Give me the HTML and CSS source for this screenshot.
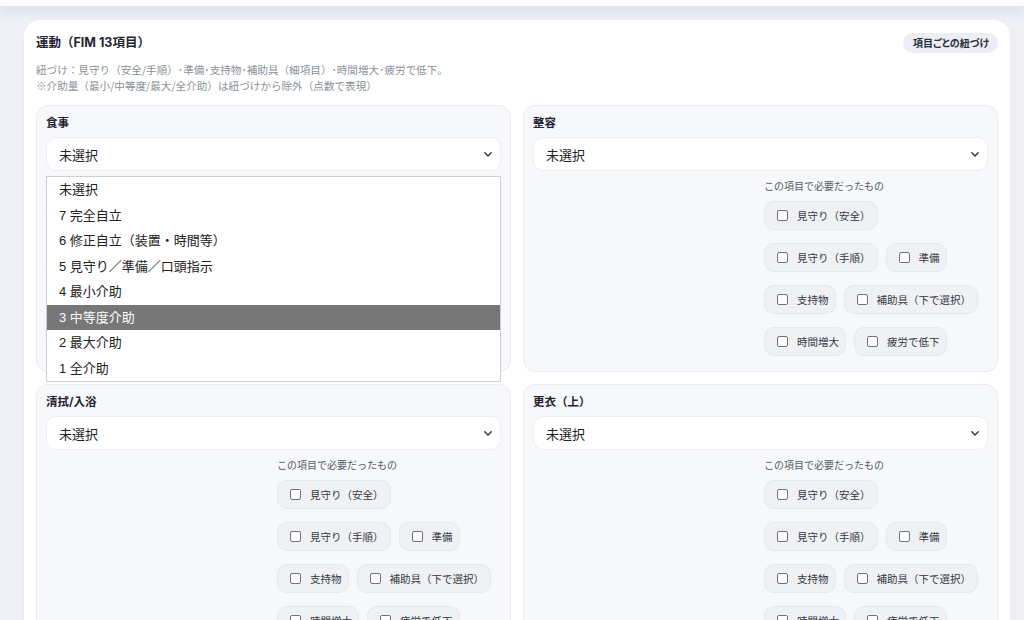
FILE: index.html
```html
<!DOCTYPE html>
<html lang="ja">
<head>
<meta charset="utf-8">
<title>運動（FIM 13項目）</title>
<link rel="stylesheet" href="styles.css">
</head>
<body>
<div class="topbar"></div>
<main class="page">
  <section class="panel">
    <div class="panel-head">
      <h2 class="panel-title">運動（FIM 13項目）</h2>
      <span class="badge">項目ごとの紐づけ</span>
    </div>
    <p class="desc">紐づけ：見守り（安全/手順）･準備･支持物･補助具（細項目）･時間増大･疲労で低下。<br>※介助量（最小/中等度/最大/全介助）は紐づけから除外（点数で表現）</p>

    <div class="grid">
      <div class="item">
        <div class="item-title">食事</div>
        <div class="select-wrap">
          <div class="select"><span>未選択</span><svg class="chev" viewBox="0 0 8 5" width="8" height="5"><polyline points="0.8,0.8 4,4 7.2,0.8"/></svg></div>
          <ul class="dropdown">
            <li>未選択</li>
            <li>7 完全自立</li>
            <li>6 修正自立（装置・時間等）</li>
            <li>5 見守り／準備／口頭指示</li>
            <li>4 最小介助</li>
            <li class="active">3 中等度介助</li>
            <li>2 最大介助</li>
            <li>1 全介助</li>
          </ul>
        </div>
        <div class="needs">
          <div class="spacer"></div>
          <div class="needs-col">
            <div class="needs-label">この項目で必要だったもの</div>
            <div class="chip-row"><label class="chip"><span class="box"></span>見守り（安全）</label></div>
            <div class="chip-row"><label class="chip"><span class="box"></span>見守り（手順）</label><label class="chip"><span class="box"></span>準備</label></div>
            <div class="chip-row"><label class="chip"><span class="box"></span>支持物</label><label class="chip"><span class="box"></span>補助具（下で選択）</label></div>
            <div class="chip-row"><label class="chip"><span class="box"></span>時間増大</label><label class="chip"><span class="box"></span>疲労で低下</label></div>
          </div>
        </div>
      </div>

      <div class="item">
        <div class="item-title">整容</div>
        <div class="select"><span>未選択</span><svg class="chev" viewBox="0 0 8 5" width="8" height="5"><polyline points="0.8,0.8 4,4 7.2,0.8"/></svg></div>
        <div class="needs">
          <div class="spacer"></div>
          <div class="needs-col">
            <div class="needs-label">この項目で必要だったもの</div>
            <div class="chip-row"><label class="chip"><span class="box"></span>見守り（安全）</label></div>
            <div class="chip-row"><label class="chip"><span class="box"></span>見守り（手順）</label><label class="chip"><span class="box"></span>準備</label></div>
            <div class="chip-row"><label class="chip"><span class="box"></span>支持物</label><label class="chip"><span class="box"></span>補助具（下で選択）</label></div>
            <div class="chip-row"><label class="chip"><span class="box"></span>時間増大</label><label class="chip"><span class="box"></span>疲労で低下</label></div>
          </div>
        </div>
      </div>

      <div class="item">
        <div class="item-title">清拭/入浴</div>
        <div class="select"><span>未選択</span><svg class="chev" viewBox="0 0 8 5" width="8" height="5"><polyline points="0.8,0.8 4,4 7.2,0.8"/></svg></div>
        <div class="needs">
          <div class="spacer"></div>
          <div class="needs-col">
            <div class="needs-label">この項目で必要だったもの</div>
            <div class="chip-row"><label class="chip"><span class="box"></span>見守り（安全）</label></div>
            <div class="chip-row"><label class="chip"><span class="box"></span>見守り（手順）</label><label class="chip"><span class="box"></span>準備</label></div>
            <div class="chip-row"><label class="chip"><span class="box"></span>支持物</label><label class="chip"><span class="box"></span>補助具（下で選択）</label></div>
            <div class="chip-row"><label class="chip"><span class="box"></span>時間増大</label><label class="chip"><span class="box"></span>疲労で低下</label></div>
          </div>
        </div>
      </div>

      <div class="item">
        <div class="item-title">更衣（上）</div>
        <div class="select"><span>未選択</span><svg class="chev" viewBox="0 0 8 5" width="8" height="5"><polyline points="0.8,0.8 4,4 7.2,0.8"/></svg></div>
        <div class="needs">
          <div class="spacer"></div>
          <div class="needs-col">
            <div class="needs-label">この項目で必要だったもの</div>
            <div class="chip-row"><label class="chip"><span class="box"></span>見守り（安全）</label></div>
            <div class="chip-row"><label class="chip"><span class="box"></span>見守り（手順）</label><label class="chip"><span class="box"></span>準備</label></div>
            <div class="chip-row"><label class="chip"><span class="box"></span>支持物</label><label class="chip"><span class="box"></span>補助具（下で選択）</label></div>
            <div class="chip-row"><label class="chip"><span class="box"></span>時間増大</label><label class="chip"><span class="box"></span>疲労で低下</label></div>
          </div>
        </div>
      </div>
    </div>
  </section>
</main>
</body>
</html>
```
FILE: styles.css
```css
* { box-sizing: border-box; }
html, body { margin: 0; padding: 0; }
body {
  background: #eef0f6;
  font-family: "Inter", "Noto Sans CJK JP", sans-serif;
  color: #1f2430;
  height: 620px;
  overflow: hidden;
}
.topbar {
  height: 6px;
  background: #ffffff;
  box-shadow: 0 3px 12px rgba(40, 50, 90, 0.16);
  position: relative;
  z-index: 1;
}
.page {
  padding: 14px 14px 0 24px;
}
.panel {
  background: #ffffff;
  border-radius: 16px;
  padding: 13px 12px 20px 12px;
  box-shadow: 0 1px 3px rgba(40, 50, 90, 0.04);
}
.panel-head {
  display: flex;
  justify-content: space-between;
  align-items: center;
  height: 20px;
}
.panel-title {
  margin: 0;
  font-size: 12.5px;
  font-weight: 700;
  line-height: 20px;
  color: #1f2430;
}
.badge {
  background: #eceef3;
  border-radius: 999px;
  font-family: "Noto Sans CJK JP", sans-serif;
  font-size: 10px;
  font-weight: 700;
  line-height: 20px;
  padding: 0 9px 0 10px;
  color: #2a2f3a;
  font-feature-settings: "palt";
}
.desc {
  margin: 9px 0 0 0;
  font-family: "Noto Sans CJK JP", sans-serif;
  font-size: 10.6px;
  line-height: 16px;
  color: #8b909a;
}
.grid {
  margin-top: 11px;
  display: grid;
  grid-template-columns: 1fr 1fr;
  gap: 12px;
}
.item {
  background: #f7f8fb;
  border: 1px solid #e9ebf0;
  border-radius: 12px;
  padding: 9px 9px 15px 9px;
}
.item-title {
  font-size: 11.5px;
  font-weight: 700;
  line-height: 16px;
  color: #1f2430;
  margin-bottom: 6px;
}
.select-wrap {
  position: relative;
}
.select {
  height: 34px;
  background: #ffffff;
  border: 1px solid #eceef2;
  border-radius: 10px;
  display: flex;
  align-items: center;
  justify-content: space-between;
  padding: 0 8px 0 12px;
  font-family: "Liberation Sans", "Noto Sans CJK JP", sans-serif;
  font-size: 13px;
  color: #222222;
}
.chev polyline {
  fill: none;
  stroke: #333333;
  stroke-width: 1.4;
  stroke-linecap: round;
  stroke-linejoin: round;
}
.dropdown {
  position: absolute;
  top: 39px;
  left: 0;
  right: 0;
  margin: 0;
  padding: 0;
  list-style: none;
  background: #ffffff;
  border: 1px solid #cfcfd2;
  z-index: 5;
  font-family: "Liberation Sans", "Noto Sans CJK JP", sans-serif;
  font-size: 13px;
  color: #222222;
}
.dropdown li {
  height: 25.5px;
  line-height: 25.5px;
  padding-left: 12px;
}
.dropdown li.active {
  background: #777777;
  color: #ffffff;
}
.needs {
  display: grid;
  grid-template-columns: 1fr 1fr;
  column-gap: 7px;
  margin-top: 8px;
}
.needs-label {
  font-size: 10px;
  line-height: 14px;
  color: #555a63;
  margin-bottom: 8px;
}
.chip-row {
  display: flex;
  gap: 8px;
  margin-bottom: 13px;
}
.chip-row:last-child { margin-bottom: 0; }
.chip {
  display: inline-flex;
  align-items: center;
  height: 29px;
  padding: 0 6px 0 12px;
  background: #eff1f5;
  border: 1px solid #e6e8ed;
  border-radius: 10px;
  font-size: 10.5px;
  color: #333842;
  white-space: nowrap;
}
.box {
  width: 11px;
  height: 11px;
  border: 1px solid #6f737b;
  border-radius: 2px;
  background: #ffffff;
  margin-right: 9px;
  flex: none;
}
```
